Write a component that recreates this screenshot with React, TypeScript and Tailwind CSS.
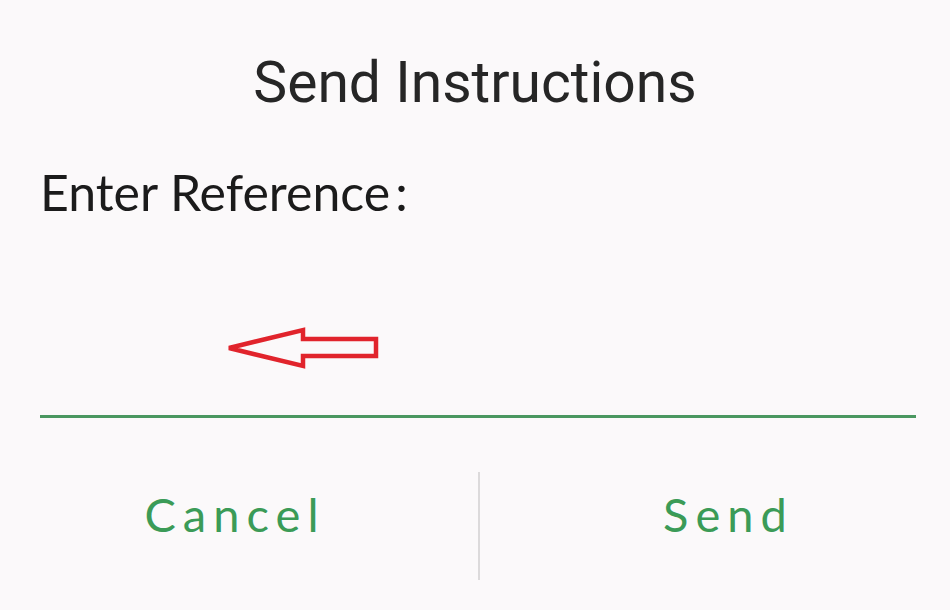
import React from "react";

const ArrowLeft = () => (
  <svg width="156" height="44" viewBox="0 0 156 44" className="block">
    <path
      d="M3 21 L77 3 L77 12 L150 12 L150 29 L77 29 L77 39 Z"
      fill="none"
      stroke="#e1242c"
      strokeWidth="4.5"
      strokeLinejoin="miter"
    />
  </svg>
);

const App = () => {
  return (
    <div className="w-[950px] h-[610px] bg-[#fbf9fa] flex flex-col overflow-hidden">
      <h1 className="mt-[55px] text-center text-[57px] leading-[56px] text-[#262626] font-['Roboto',sans-serif] font-normal">
        Send Instructions
      </h1>
      <p className="mt-[57px] ml-[40px] text-[50px] leading-[48px] text-[#1b1b1b] font-['Lato',sans-serif]">
        Enter Reference<span className="ml-[5px]">:</span>
      </p>
      <div className="ml-[40px] mr-[34px] h-[202px] border-b-[3px] border-[#4a9760] flex items-start">
        <div className="mt-[111px] ml-[186px]">
          <ArrowLeft />
        </div>
      </div>
      <div className="flex-1 flex items-center font-['Lato',sans-serif] text-[47px] tracking-[0.15em] text-[#3b9b57]">
        <button type="button" className="w-[478px] text-center pr-[8px]">
          Cancel
        </button>
        <div className="w-[2px] h-[108px] mt-[24px] bg-[#dcdadb]" />
        <button type="button" className="flex-1 text-center pl-[27px]">
          Send
        </button>
      </div>
    </div>
  );
};

export default App;
